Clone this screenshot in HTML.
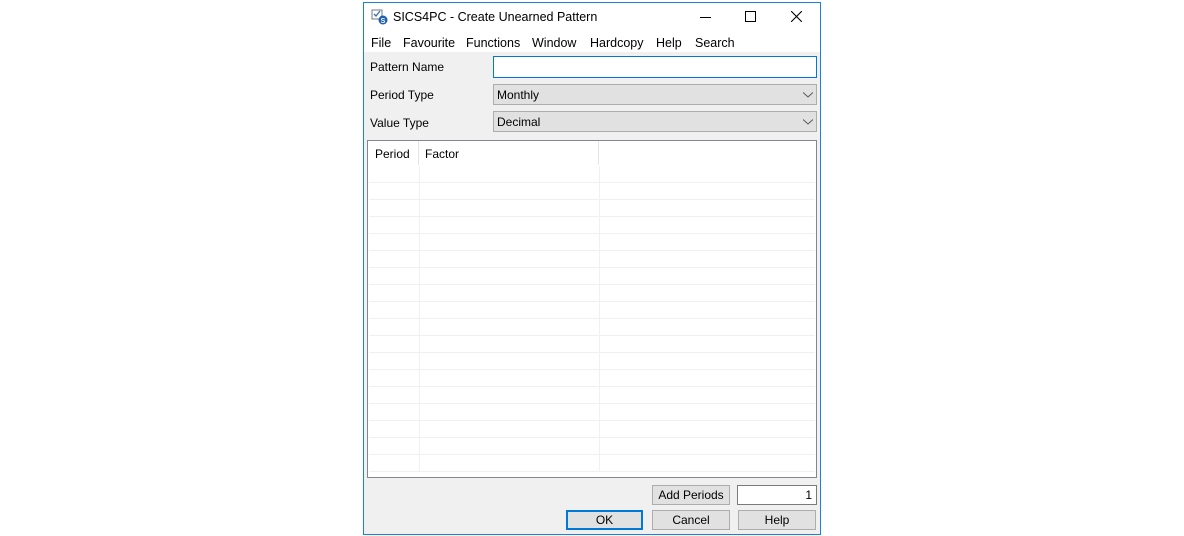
<!DOCTYPE html>
<html><head><style>
body{margin:0;width:1184px;height:536px;background:#fff;position:relative;font-family:"Liberation Sans",sans-serif;font-size:12px;color:#000;overflow:hidden}
.a{position:absolute;box-sizing:border-box}
.win{left:363px;top:2px;width:458px;height:533px;border:1px solid #1883d7;background:#f0f0f0}
.lbl{position:absolute;font-size:12px}
.m{position:absolute;top:36px;font-size:12.5px}
.btn{position:absolute;box-sizing:border-box;background:#e1e1e1;border:1px solid #adadad;text-align:center;line-height:18px;font-size:12px}
.combo{position:absolute;box-sizing:border-box;background:#e1e1e1;border:1px solid #adadad;padding-left:3px;line-height:21px}
</style></head><body>
<div class="a win"></div>
<div class="a" style="left:364px;top:3px;width:456px;height:49px;background:#fff"></div>
<svg class="a" style="left:371px;top:9px" width="18" height="16" viewBox="0 0 18 16">
<rect x="1" y="1" width="10" height="9" fill="#fff" stroke="#6b7b8c"/><path d="M3 5l2 2 4-5" stroke="#3a6ea5" fill="none" stroke-width="1.3"/>
<circle cx="12" cy="11" r="4.5" fill="#1e5fb3"/><text x="12" y="14" font-size="7" fill="#fff" text-anchor="middle" font-family="Liberation Sans" font-weight="bold">S</text></svg>
<div class="lbl" style="left:393px;top:10px;font-size:12.5px">SICS4PC - Create Unearned Pattern</div>
<div class="a" style="left:700px;top:17px;width:11px;height:1px;background:#000"></div>
<div class="a" style="left:745px;top:11px;width:11px;height:11px;border:1px solid #000"></div>
<svg class="a" style="left:791px;top:11px" width="11" height="11"><path d="M0 0L11 11M11 0L0 11" stroke="#000" stroke-width="1.1"/></svg>
<div class="m" style="left:371px">File</div>
<div class="m" style="left:403px">Favourite</div>
<div class="m" style="left:466px">Functions</div>
<div class="m" style="left:532px">Window</div>
<div class="m" style="left:590px">Hardcopy</div>
<div class="m" style="left:656px">Help</div>
<div class="m" style="left:695px">Search</div>
<div class="lbl" style="left:370px;top:60px">Pattern Name</div>
<div class="lbl" style="left:370px;top:88px">Period Type</div>
<div class="lbl" style="left:370px;top:116px">Value Type</div>
<div class="a" style="left:493px;top:56px;width:324px;height:22px;border:1px solid #0078d7;background:#fff"></div>
<div class="combo" style="left:493px;top:84px;width:324px;height:21px">Monthly</div>
<div class="combo" style="left:493px;top:111px;width:324px;height:21px">Decimal</div>
<svg class="a" style="left:803px;top:92px" width="10" height="6"><path d="M0 0.5L5 5L10 0.5" stroke="#555" fill="none"/></svg>
<svg class="a" style="left:803px;top:119px" width="10" height="6"><path d="M0 0.5L5 5L10 0.5" stroke="#555" fill="none"/></svg>
<div class="a" style="left:367px;top:140px;width:450px;height:338px;border:1px solid #828790;background:#fff"></div>
<div class="a" style="left:369px;top:166px;width:446px;height:306px;background:repeating-linear-gradient(to bottom,transparent 0,transparent 16px,#f0f0f0 16px,#f0f0f0 17px)"></div>
<div class="a" style="left:418px;top:141px;width:1px;height:24px;background:#e5e5e5"></div>
<div class="a" style="left:598px;top:141px;width:1px;height:24px;background:#e5e5e5"></div>
<div class="a" style="left:419px;top:166px;width:1px;height:306px;background:#f0f0f0"></div>
<div class="a" style="left:599px;top:166px;width:1px;height:306px;background:#f0f0f0"></div>
<div class="lbl" style="left:375px;top:147px">Period</div>
<div class="lbl" style="left:425px;top:147px">Factor</div>
<div class="btn" style="left:652px;top:485px;width:78px;height:20px">Add Periods</div>
<div class="a" style="left:737px;top:485px;width:80px;height:20px;border:1px solid #7a7a7a;background:#fff;text-align:right;padding-right:4px;line-height:18px">1</div>
<div class="btn" style="left:566px;top:510px;width:77px;height:20px;border:2px solid #0078d7;line-height:16px">OK</div>
<div class="btn" style="left:652px;top:510px;width:78px;height:20px">Cancel</div>
<div class="btn" style="left:738px;top:510px;width:78px;height:20px">Help</div>
</body></html>
